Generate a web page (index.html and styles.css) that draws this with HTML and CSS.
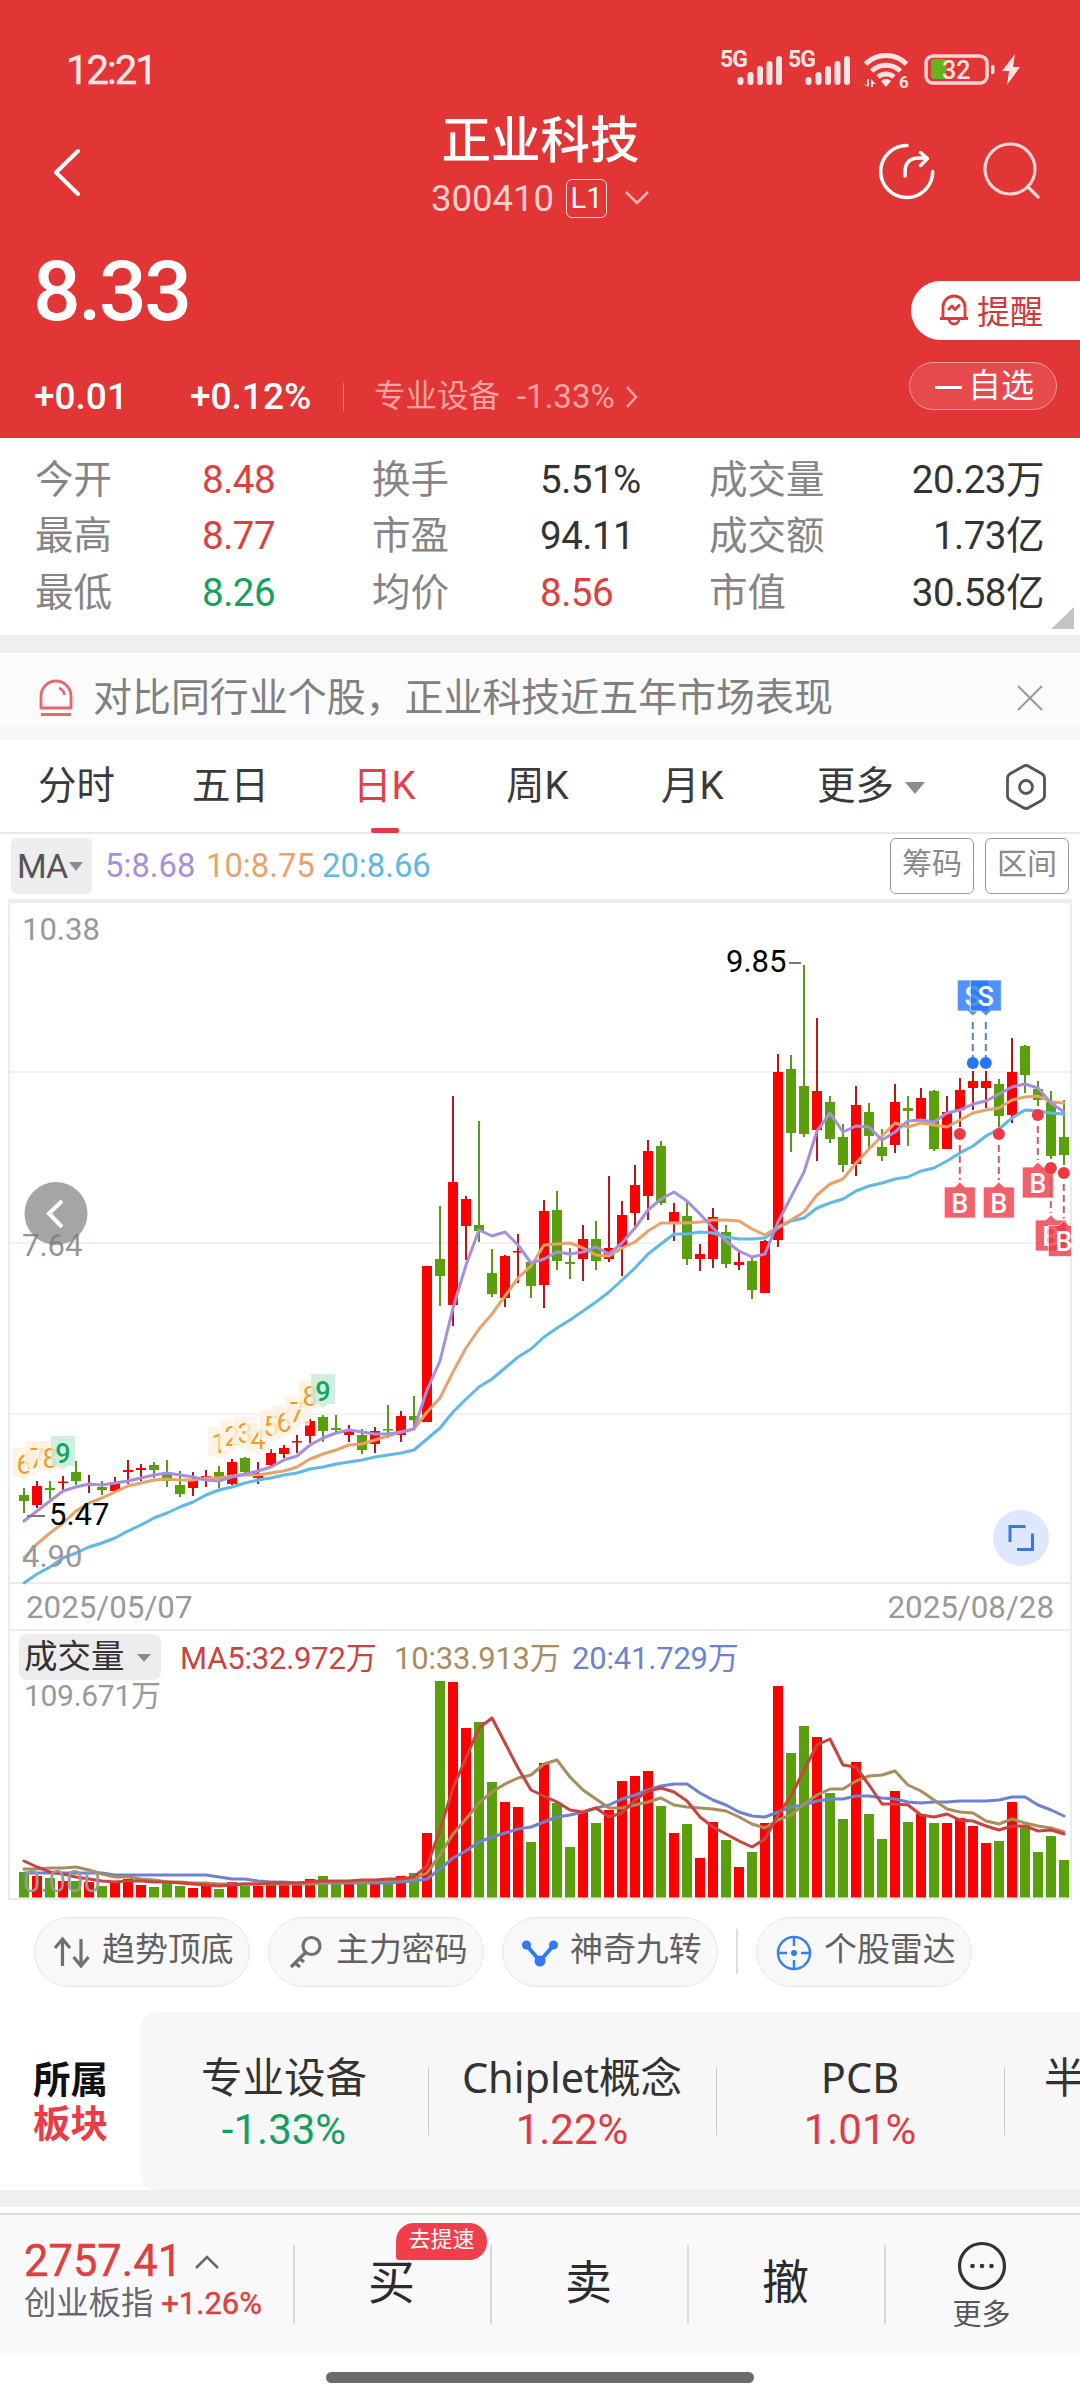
FILE: index.html
```html
<!DOCTYPE html>
<html lang="zh-CN">
<head>
<meta charset="utf-8">
<title>正业科技 300410</title>
<link rel="stylesheet" href="styles.css">
</head>
<body>
<div class="app">
  <header class="hero">
    <div class="status">
      <span class="clock">12:21</span>
      <svg class="status-icons" width="310" height="52" viewBox="716 40 310 52">
        <g class="net"><text x="720" y="67">5G</text><text x="788" y="67">5G</text></g>
        <g class="bars">
          <path d="M740.5 82v-2M750.500 82v-7M760 82v-13M769.500 82v-18M779 82v-23"/>
          <path d="M808.500 82v-2M818.500 82v-7M828 82v-13M837.500 82v-18M847 82v-23"/>
        </g>
        <g class="wifi"><path d="M865.500 64a29 29 0 0 1 41 0M871.500 71a21 21 0 0 1 29 0M878 77a12 12 0 0 1 16 0"/></g>
        <path class="solid" d="M881 81a7 7 0 0 1 10 0l-5 6zM863 83l4 4v-8h2v8zM871 87v-8l5 5h-3v3z"/>
        <text class="tiny" x="899" y="88">6</text>
        <rect x="926" y="56" width="61" height="27" rx="7" class="cell"/>
        <path class="charge" d="M934 59h12v20h-12q-3 0-3-3v-14q0-3 3-3z"/>
        <text class="level" x="942" y="79">32</text>
        <rect x="991" y="65" width="3.500" height="9" rx="1.500" class="solid"/>
        <path class="solid" d="M1015 54l-13 17h7l-2 14 13-18h-7z"/>
      </svg>
    </div>
    <div class="nav">
      <svg class="back" width="30" height="50" viewBox="0 0 30 50"><path d="M26 4L4 25.500 26 47"/></svg>
      <div class="title">
        <h1>正业科技</h1>
        <div class="code"><span>300410</span><b>L1</b><svg width="26" height="16" viewBox="0 0 26 16"><path d="M2 2l11 11L24 2"/></svg></div>
      </div>
      <svg class="nav-icons" width="164" height="60" viewBox="878 142 164 60">
        <path class="share" d="M907 145.500a26 26 0 1 0 25.700 26M905 176v-4q0-14 14-14h8M920.500 152.500l7 6-7 7"/>
        <path class="search" d="M1035 169a25 25 0 1 0-50 0a25 25 0 0 0 50 0M1029 188l9 9"/>
      </svg>
    </div>
    <div class="quote">
      <div class="price">8.33</div>
      <div class="alert">
        <svg width="32" height="34" viewBox="0 0 32 34"><path d="M2 25.500h28M5 25V14a11 11 0 0 1 22 0v11M11 26a5 5 0 0 0 10 0M10 17l4-4 3 3.500 5-5"/></svg>
        提醒
      </div>
    </div>
    <div class="change">
      <span class="diff">+0.01</span><span class="pct">+0.12%</span><i></i>
      <span class="industry">专业设备</span><span class="industry-pct">-1.33%</span>
      <svg width="14" height="24" viewBox="0 0 14 24"><path d="M2 2l9 10-9 10"/></svg>
      <div class="watch"><em></em>自选</div>
    </div>
  </header>

  <section class="stats">
    <span>今开</span><b class="up">8.48</b><span>换手</span><b>5.51%</b><span>成交量</span><b class="end">20.23万</b>
    <span>最高</span><b class="up">8.77</b><span>市盈</span><b>94.11</b><span>成交额</span><b class="end">1.73亿</b>
    <span>最低</span><b class="down">8.26</b><span>均价</span><b class="up">8.56</b><span>市值</span><b class="end">30.58亿</b>
    <i class="corner"></i>
  </section>

  <section class="notice">
    <svg width="36" height="38" viewBox="0 0 36 38"><path d="M3 29V17a15 15 0 0 1 30 0v12zM3 35.500h30M21 9q5 2 5.500 7"/></svg>
    <p>对比同行业个股，正业科技近五年市场表现</p>
    <svg class="close" width="26" height="26" viewBox="0 0 26 26"><path d="M1 1l24 24M25 1L1 25"/></svg>
  </section>

  <nav class="tabs">
    <span>分时</span><span>五日</span><span class="active">日K</span><span>周K</span><span>月K</span><span class="more">更多<i class="tri"></i></span>
    <svg width="42" height="48" viewBox="0 0 42 48"><path d="M18 3.500q3-2 6 0l12.500 7q3 1.700 3 5v17q0 3.300-3 5l-12.500 7q-3 2-6 0l-12.500-7q-3-1.700-3-5v-17q0-3.300 3-5z"/><circle cx="21" cy="24" r="6.500"/></svg>
  </nav>

  <div class="ma">
    <div class="ma-pick">MA<i class="tri"></i></div>
    <span class="c5">5:8.68</span><span class="c10">10:8.75</span><span class="c20">20:8.66</span>
    <div class="box-btn">筹码</div><div class="box-btn">区间</div>
  </div>

  <svg class="chart" id="price" width="1080" height="684" viewBox="0 900 1080 684"></svg>
  <div class="dates"><span>2025/05/07</span><span>2025/08/28</span></div>
  <div class="vol-head">
    <div class="vol-pick">成交量<i class="tri"></i></div>
    <span class="v5">MA5:32.972万</span><span class="v10">10:33.913万</span><span class="v20">20:41.729万</span>
  </div>
  <svg class="chart" id="volume" width="1080" height="220" viewBox="0 1680 1080 220"></svg>

  <div class="chips">
    <div class="chip"><svg width="38" height="36" viewBox="0 0 38 36"><path class="gray" d="M9.500 31V5M2 13l7.500-9 7.500 9M28 4v27M20.500 22l7.500 9 7.500-9"/></svg>趋势顶底</div>
    <div class="chip"><svg width="38" height="36" viewBox="0 0 38 36"><path class="gray" d="M33 11a8.500 8.500 0 1 0-17 0a8.500 8.500 0 0 0 17 0M18.500 17.500L4 32M8 28l5 4M12 23l5 4"/></svg>主力密码</div>
    <div class="chip"><svg width="38" height="36" viewBox="0 0 38 36"><path class="blue thick" d="M6 11l13 15L32 11"/><g class="bluefill"><circle cx="5.500" cy="10" r="4.500"/><circle cx="32.500" cy="10" r="4.500"/><circle cx="19" cy="26" r="5.500"/></g></svg>神奇九转</div>
    <i class="sep"></i>
    <div class="chip"><svg width="38" height="36" viewBox="0 0 38 36"><circle class="blue" cx="19" cy="18" r="16"/><path class="blue" d="M19 2v9M19 25v9M3 18h9M26 18h9"/><circle class="bluefill" cx="19" cy="18" r="3"/></svg>个股雷达</div>
  </div>

  <section class="sector">
    <div class="sector-title">所属<b>板块</b></div>
    <div class="sector-list">
      <div class="item"><span>专业设备</span><b class="down">-1.33%</b></div>
      <div class="item"><span>Chiplet概念</span><b class="rise">1.22%</b></div>
      <div class="item"><span>PCB</span><b class="rise">1.01%</b></div>
      <div class="item cut"><span>半</span></div>
    </div>
  </section>

  <footer class="trade">
    <div class="index">
      <div class="index-val">2757.41<svg width="26" height="16" viewBox="0 0 26 16"><path d="M2 14L13 3l11 11"/></svg></div>
      <div class="index-name">创业板指 <b>+1.26%</b></div>
    </div>
    <div class="act">买<span class="badge">去提速</span></div>
    <div class="act">卖</div>
    <div class="act">撤</div>
    <div class="act last"><svg width="50" height="50" viewBox="0 0 50 50"><circle cx="25" cy="25" r="22.500"/><g><circle cx="15.500" cy="25" r="2.300"/><circle cx="25" cy="25" r="2.300"/><circle cx="34.500" cy="25" r="2.300"/></g></svg><span>更多</span></div>
  </footer>
  <div class="home"><i></i></div>
</div>
<script src="chart.js"></script>
</body>
</html>
```
FILE: styles.css
```css
* { box-sizing: border-box; margin: 0; padding: 0; }
body { width: 1080px; height: 2400px; overflow: hidden; background: #fff; font-family: Roboto, "Noto Sans CJK SC", sans-serif; color: #333; }
.app { width: 1080px; height: 2400px; display: flex; flex-direction: column; }
.app > * { flex: none; }
svg { display: block; fill: none; flex: none; overflow: visible; }
i, em { display: block; font-style: normal; }
b { font-weight: 400; }
.up { color: #dd403d; }
.down { color: #14a15d; }
.rise { color: #e03c46; }
.tri { border: solid transparent; border-top-color: #8c8c8c; border-bottom: 0; }

.hero { height: 438px; background: #e23536; color: #fff; }
.status { height: 110px; padding: 40px 54px 0 66px; display: flex; justify-content: space-between; }
.clock { font-size: 40px; line-height: 44px; margin-top: 9px; letter-spacing: -2px; color: #ffe6e6; -webkit-text-stroke: .4px #ffe6e6; }
.status-icons { font-weight: 500; }
.net text { font-size: 23px; fill: #ffe3e3; letter-spacing: -1px; font-weight: 700; }
.bars path { stroke: #ffe3e3; stroke-width: 6; stroke-linecap: round; }
.wifi path { stroke: #ffe3e3; stroke-width: 5; }
.solid { fill: #ffe3e3; }
.tiny { font-size: 17px; fill: #ffe3e3; font-weight: 700; }
.cell { stroke: #ffd3d3; stroke-width: 3.500px; }
.charge { fill: #62b51a; }
.level { font-size: 25px; fill: #ffe3e3; }
.nav { height: 120px; display: flex; position: relative; justify-content: space-between; padding: 0 38px 0 52px; }
.back { margin-top: 37px; }
.back path { stroke: #fff; stroke-width: 4; stroke-linecap: round; stroke-linejoin: round; }
.title { margin-left: 121px; text-align: center; width: 420px; }
.title h1 { font-size: 49.500px; line-height: 60px; font-weight: 500; margin-top: 1px; }
.code { display: flex; justify-content: center; align-items: center; height: 40px; margin-top: 7px; font-size: 36.500px; color: #ffd0d0; }
.code b { width: 41px; height: 39px; margin: 0 17px 0 12px; border: 1.500px solid #ffd9d9; border-radius: 6px; font-size: 29px; line-height: 36px; color: #fff; }
.code path { stroke: #ffb4b4; stroke-width: 2.500px; }
.nav-icons { margin-top: 32px; }
.nav-icons path { stroke-linecap: round; stroke-linejoin: round; }
.share { stroke: #fff; stroke-width: 3.500px; }
.search { stroke: #ffd5d5; stroke-width: 3.200px; }
.quote { height: 130px; display: flex; justify-content: space-between; padding-left: 33px; }
.price { font-size: 84px; line-height: 98px; font-weight: 500; margin-top: 13px; letter-spacing: -2.500px; }
.alert { width: 169px; height: 59px; margin-top: 51px; background: #fff; border-radius: 30px 0 0 30px; display: flex; align-items: center; padding-left: 27px; gap: 7px; font-size: 33px; color: #ce3a3a; padding-bottom: 2px; }
.alert path { stroke: #d83c3c; stroke-width: 2.800px; stroke-linejoin: round; }
.change { height: 78px; display: flex; align-items: flex-start; padding: 3px 23px 0 34px; font-size: 37px; line-height: 67px; }
.change > span { white-space: nowrap; }
.diff { width: 156px; font-weight: 500; }
.pct { width: 153px; font-weight: 500; }
.change > i { width: 1px; height: 28px; background: #f08a8a; margin: 20px 30px 0 0; }
.industry { font-size: 31.500px; color: #f6a3a3; width: 143px; }
.industry-pct { font-size: 33px; color: #f6a3a3; width: 108px; }
.change > svg { margin-top: 22px; }
.change > svg path { stroke: #f6a3a3; stroke-width: 2.500px; }
.watch { margin-left: auto; width: 148px; height: 48px; margin-top: -1px; border: 1.500px solid #f29a9a; border-radius: 24px; background: rgba(255,255,255,.11); display: flex; align-items: center; padding-left: 25px; gap: 6px; font-size: 33px; line-height: 42px; }
.watch em { width: 27px; height: 3px; background: #fff; margin-top: 2px; }

.stats { height: 197px; position: relative; display: grid; grid-template-columns: 167px 170px 168px 169px 169px 166px; grid-auto-rows: 56.500px; padding: 13.500px 0 0 35px; font-size: 38.500px; line-height: 56px; color: #858585; background: #fff; }
.stats b { color: #333; letter-spacing: -.5px; }
.stats span { white-space: nowrap; }
.stats b.up { color: #dd403d; }
.stats b.down { color: #14a15d; }
.stats .end { text-align: right; }
.corner { position: absolute; right: 6px; bottom: 6px; border: solid transparent; border-width: 22px 0 0 23px; border-left: 23px solid transparent; border-bottom: 22px solid #c4c4c4; border-top: 0; }

.notice { height: 105px; border-top: 18px solid #efefef; border-bottom: 14px solid #f7f7f7; background: #fbfbfb; display: flex; align-items: center; padding: 16px 37px 0 38px; }
.notice svg path { stroke: #e26a6f; stroke-width: 2.800px; stroke-linejoin: round; }
.notice p { flex: 1; margin-left: 19px; font-size: 38.950px; line-height: 56px; color: #808080; }
.notice .close path { stroke: #999; stroke-width: 2px; }

.tabs { height: 94px; border-bottom: 2px solid #e8e8e8; display: grid; grid-template-columns: 154px 161px 153px 155px 156px 188px 42px; padding-left: 38px; font-size: 38.500px; line-height: 88px; padding-top: 2px; color: #3a3a3a; align-items: start; }
.tabs .active { color: #e0404a; position: relative; }
.tabs .active::after { content: ""; position: absolute; left: 18px; top: 86px; width: 28px; height: 5px; border-radius: 2px; background: #e23c46; }
.tabs svg { margin-top: 21px; }
.tabs svg * { stroke: #555; stroke-width: 2.800px; }
.more { display: flex; align-items: center; gap: 11px; }
.more .tri { border-width: 12px 10.500px 0; margin-top: 4px; }

.ma { height: 66px; display: flex; align-items: flex-start; padding: 4px 11px 0; font-size: 32.800px; line-height: 56px; }
.ma-pick { width: 81px; height: 56px; background: #ededed; border-radius: 6px; display: flex; align-items: center; padding-left: 6px; gap: 2px; margin-right: 13px; color: #555; font-size: 34px; letter-spacing: -1px; }
.ma-pick .tri { border-width: 9px 7px 0; }
.c5 { color: #a68fdd; width: 101px; }
.c10 { color: #e8a36c; width: 116px; }
.c20 { color: #5fb8e6; flex: 1; }
.box-btn { width: 84px; height: 56px; border: 1.500px solid #999; border-radius: 6px; text-align: center; font-size: 30px; line-height: 50px; color: #8a8a8a; margin-left: 11px; }

.chart text { font-size: 31px; }
.frame { stroke: #ebebeb; stroke-width: 2; }
.top { stroke: #ededed; stroke-width: 4; }
.grid { stroke: #f1f1f1; stroke-width: 2; }
.r { fill: #f00; }
.g { fill: #5aa00c; }
.rw { stroke: #b81618; stroke-width: 2; }
.gw { stroke: #5a9a18; stroke-width: 2; }
.line { stroke-width: 3px; stroke-linejoin: round; stroke-linecap: round; }
.axis { fill: #999; }
.mark { fill: #000; }
.tag { fill: #e6a030; text-anchor: middle; }
.chart text.tag { font-size: 27px; }
.chart text.nine { fill: #14a55f; font-weight: 500; }
.tag-bg { fill: #fff0df; fill-opacity: .8; stroke: #fff; stroke-width: 1; }
.nine-bg { fill: #c8ecda; fill-opacity: .85; }
.chart text.trade-text { fill: #fff; font-size: 27px; font-weight: 500; text-anchor: middle; }
.chart text.max { font-size: 30px; letter-spacing: -.3px; }
.dates { height: 45px; display: flex; justify-content: space-between; margin: 0 8px; padding: 0 16px; border: solid #ebebeb; border-width: 0 2px; font-size: 31.300px; line-height: 47px; color: #999; }
.vol-head { height: 51px; margin: 0 8px; border: solid #ebebeb; border-width: 2px 2px 0; display: flex; padding: 3px 0 0 9px; font-size: 31px; line-height: 50px; white-space: nowrap; letter-spacing: -.2px; }
.vol-pick { width: 142px; height: 46px; border-radius: 8px; background: #ededed; display: flex; align-items: center; gap: 12px; padding-left: 5px; margin-right: 19px; font-size: 33.500px; letter-spacing: 0; color: #333; }
.vol-pick .tri { border-width: 8px 7px 0; margin-top: 2px; }
.v5 { color: #c9433f; width: 214px; }
.v10 { color: #a88d5d; width: 178px; }
.v20 { color: #6d83cf; }

.chips { height: 112px; display: flex; padding: 17px 0 0 34px; }
.chip { width: 216px; height: 70px; border: 1.500px solid #e6e6e6; border-radius: 35px; background: #f8f8f8; display: flex; align-items: center; margin-right: 18px; padding: 0 0 11px 18px; gap: 11px; font-size: 32.900px; color: #606060; white-space: nowrap; }
.chip svg { margin-top: 12px; }
.sep { width: 2px; height: 45px; background: #ddd; margin: 12px 18px 0 0; }
.gray { stroke: #707070; stroke-width: 3.200; }
.blue { stroke: #3c80f0; stroke-width: 2.500px; }
.thick { stroke-width: 4; stroke: #2f7af5; }
.bluefill { fill: #2f7af5; }

.sector { height: 195px; border-bottom: 17px solid #efefef; display: flex; }
.sector-title { width: 141px; padding: 46px 0 0 33px; font-size: 37.500px; line-height: 44px; font-weight: 700; color: #111; }
.sector-title b { display: block; font-weight: 700; color: #ea3b48; }
.sector-list { flex: 1; background: #f7f7f7; border-radius: 14px 0 0 14px; display: flex; overflow: hidden; height: 178px; }
.item { flex: none; width: 288px; position: relative; text-align: center; padding-top: 35px; white-space: nowrap; font-size: 41.500px; font-family: "Noto Sans", "Noto Sans CJK SC", sans-serif; }
.item::after { content: ""; position: absolute; right: 0; top: 55px; height: 68px; width: 1px; background: #ccc; }
.item span, .item b { display: block; line-height: 60px; margin-left: -2px; }
.item b { font-family: Roboto, sans-serif; font-size: 42px; line-height: 46px; }
.cut { text-align: left; padding-left: 41px; }

.trade { height: 148px; border-top: 6px solid #fff; background: #f9f9fb; box-shadow: inset 0 2px #dadada; display: flex; }
.index { width: 293px; padding: 24px 0 0 24px; }
.index-val { display: flex; align-items: center; gap: 12px; font-size: 43.500px; line-height: 50px; color: #dd403d; -webkit-text-stroke: .4px #dd403d; }
.index-val path { stroke: #666; stroke-width: 2.500px; }
.index-name { font-size: 32.300px; line-height: 38px; margin-top: -3px; color: #666a70; white-space: nowrap; }
.index-name b { font-size: 31px; color: #dd403d; -webkit-text-stroke: .4px #dd403d; }
.act { width: 197px; position: relative; text-align: center; font-size: 47px; line-height: 139px; color: #2c2c2c; }
.act::before { content: ""; position: absolute; left: 0; top: 32px; width: 2px; height: 79px; background: #d9d9dc; }
.badge { position: absolute; left: 103px; top: 10px; width: 91px; height: 37px; border-radius: 18px 18px 18px 3px; background: #f03e4b; color: #fff; font-size: 22px; line-height: 34px; }
.last { width: 195px; display: flex; flex-direction: column; align-items: center; padding-top: 28px; line-height: 48px; font-size: 29px; color: #555; }
.last > svg > circle { stroke: #333; stroke-width: 3.200px; }
.last g { fill: #333; }
.home { height: 45px; display: flex; justify-content: center; padding-top: 17px; }
.home i { width: 428px; height: 11px; border-radius: 6px; background: #6b6b6b; }
```
FILE: chart.js
```js
const x = i => 24 + i * 13;

// trend, high, body top, body bottom, low
const candles = `g 1488 1495 1501 1513|r 1481 1486 1505 1508|g 1481 1488 1490 1499|r 1476 1481.5 1483 1492|g 1461 1472 1481 1485|r 1475 1484 1485.5 1493|g 1481 1487 1490 1495|r 1477 1482 1491 1492|r 1460 1470 1472 1484|r 1464 1468 1470 1481
g 1462 1465 1470 1478|g 1460 1473 1481 1487|g 1471 1485 1494 1497|r 1472 1480 1488 1496|r 1470 1476 1477.5 1487|g 1466 1472 1477 1488|r 1459 1462 1484 1485|g 1457 1458 1472 1476|r 1462 1473 1478 1484|r 1449 1453 1465 1467
r 1445 1448 1454 1458|r 1435 1441 1442.5 1453|r 1419 1421 1436 1443|g 1415 1417 1431 1442|g 1415 1428 1430 1432|r 1425 1431 1435 1442|g 1429 1435 1450 1454|r 1427 1431 1444 1453|g 1405 1429 1430.5 1438|r 1411 1416 1435 1442
g 1396 1416 1420 1427|r 1266 1266 1422 1422|g 1206 1259 1276 1306|r 1096 1182 1305 1326|r 1196 1199 1226 1260|g 1121 1225 1231 1242|g 1249 1273 1294 1297|r 1255 1256 1298 1307|r 1234 1251 1252.5 1283|g 1261 1262 1286 1298
r 1200 1211 1285 1308|g 1191 1210 1261 1270|g 1248 1262 1264 1279|r 1225 1239 1259 1281|g 1221 1239 1261 1270|r 1176 1248 1259 1262|r 1201 1215 1247 1276|r 1165 1185 1213 1227|r 1140 1151 1196 1220|g 1141 1146 1203 1205
r 1203 1212 1222 1241|g 1202 1216 1259 1265|r 1244 1254 1259 1271|r 1208 1217 1259 1268|g 1225 1232 1264 1268|r 1252 1262 1265 1270|g 1258 1261 1290 1299|r 1240 1241 1293 1293|r 1054 1072 1240 1247|g 1055 1069 1133 1152
g 965 1086 1134 1137|r 1018 1091 1130 1161|g 1096 1102 1139 1143|g 1124 1137 1165 1172|r 1086 1105 1164 1176|g 1103 1112 1136 1148|g 1129 1147 1156 1161|r 1084 1102 1145 1153|g 1096 1108 1111 1146|r 1088 1098 1119 1120
g 1090 1091 1149 1151|r 1096 1112 1149 1149|r 1078 1090 1110 1127|r 1071 1081 1088 1110|r 1071 1081 1088 1108|g 1079 1084 1116 1130|r 1038 1072 1115 1123|g 1045 1046 1075 1093|g 1081 1089 1100 1106|g 1091 1102 1156 1159
g 1100 1137 1155 1165`.split(/[|\n]/).map(s => s.split(' '));

const priceMA = {
  '#5fb8e6': [1583,1574,1567,1558,1553,1547,1543,1538,1531,1525,1518,1513,1507,1502,1495,1490,1487,1483,1480,1478,1475,1473,1469,1467,1464,1462,1460,1457,1455,1453,1450,1439,1428,1412,1399,1387,1379,1368,1357,1349,1337,1328,1320,1311,1302,1292,1280,1268,1254,1244,1234,1234,1232,1233,1237,1239,1239,1238,1228,1221,1218,1208,1203,1199,1191,1186,1183,1179,1177,1171,1168,1161,1153,1146,1136,1129,1118,1110,1111,1113,1114],
  '#e8a36c': [1558,1544,1533,1523,1511,1503,1498,1492,1486,1483,1480,1479,1480,1480,1478,1478,1476,1475,1475,1473,1471,1467,1459,1454,1450,1445,1444,1440,1436,1432,1429,1412,1398,1372,1348,1329,1314,1296,1278,1266,1245,1244,1243,1248,1255,1256,1248,1242,1231,1223,1223,1223,1222,1220,1220,1221,1229,1235,1227,1220,1212,1195,1184,1179,1163,1149,1136,1123,1127,1123,1125,1127,1120,1113,1110,1108,1100,1097,1096,1102,1103],
  '#a68fdd': [1521,1511,1501,1491,1487,1484,1485,1483,1481,1478,1475,1473,1475,1477,1480,1481,1477,1474,1471,1467,1460,1456,1445,1438,1433,1430,1432,1434,1434,1432,1429,1390,1361,1308,1265,1230,1236,1232,1245,1263,1259,1252,1254,1252,1247,1254,1243,1228,1210,1199,1192,1201,1214,1228,1241,1251,1257,1254,1222,1197,1172,1131,1113,1132,1126,1127,1140,1132,1121,1120,1122,1113,1110,1104,1101,1094,1087,1084,1088,1103,1112]
};

const volumes = [1872,1876,1878,1881,1881,1882,1886,1883,1879,1885,1887,1883,1886,1888,1886,1889,1882,1886,1886,1884,1883,1883,1879,1876,1883,1883,1880,1879,1878,1876,1873,1833,1681,1682,1728,1722,1782,1802,1807,1842,1763,1803,1847,1812,1823,1810,1781,1776,1771,1806,1833,1824,1858,1822,1840,1867,1852,1823,1686,1753,1726,1737,1793,1819,1762,1814,1839,1791,1822,1814,1823,1823,1818,1826,1843,1841,1802,1825,1852,1836,1860];

const volumeMA = {
  '#6d83cf': [1873,1873,1873,1873,1873,1873,1873,1875,1875,1875,1875,1875,1875,1875,1875,1877,1879,1879,1881,1882,1882,1883,1883,1883,1883,1883,1883,1883,1883,1882,1881,1879,1869,1858,1851,1842,1837,1833,1829,1827,1822,1817,1815,1812,1808,1805,1799,1795,1790,1786,1784,1784,1793,1800,1805,1812,1816,1817,1812,1807,1805,1801,1799,1799,1796,1796,1798,1799,1802,1803,1802,1802,1801,1801,1801,1800,1797,1797,1805,1810,1816],
  '#a88d5d': [1869,1869,1868,1868,1867,1870,1874,1877,1877,1879,1880,1882,1882,1883,1883,1884,1884,1884,1884,1884,1884,1884,1884,1883,1882,1882,1882,1881,1881,1880,1879,1873,1855,1834,1819,1803,1792,1784,1778,1775,1764,1760,1777,1790,1799,1808,1808,1805,1802,1798,1805,1807,1808,1809,1811,1817,1824,1828,1820,1815,1804,1795,1789,1789,1781,1776,1775,1771,1785,1791,1800,1809,1812,1813,1821,1824,1819,1823,1826,1828,1832],
  '#c9433f': [1861,1867,1872,1874,1877,1879,1881,1882,1881,1881,1882,1882,1883,1884,1885,1886,1885,1884,1884,1883,1883,1883,1882,1881,1881,1881,1880,1880,1879,1879,1877,1866,1830,1788,1758,1728,1718,1743,1768,1790,1796,1802,1810,1812,1808,1817,1813,1800,1791,1788,1792,1801,1817,1827,1834,1841,1847,1839,1815,1796,1770,1745,1739,1765,1767,1785,1804,1804,1805,1815,1817,1814,1820,1821,1826,1830,1826,1826,1831,1830,1834]
};

const lines = set => Object.entries(set).map(([color, ys]) =>
  `<polyline class="line" stroke="${color}" points="${ys.map((y, i) => x(i) + ',' + y).join(' ')}"/>`).join('');
const text = (cls, tx, ty, s) => `<text class="${cls}" x="${tx}" y="${ty}">${s}</text>`;

let out = '<path class="grid" d="M9 1072H1071M9 1243H1071M9 1414H1071"/>';
out += '<path class="frame" d="M9 1584V900M1071 900V1584M9 1583H1071"/><path class="top" d="M8 901H1072"/>';
candles.forEach(([c, h, t, b, l], i) => {
  out += `<path class="${c}w" d="M${x(i)} ${h}V${l}"/><rect class="${c}" x="${x(i) - 5}" y="${t}" width="10" height="${b - t}"/>`;
});
out += lines(priceMA);

// nine-turn counters: candle index, text baseline, digit
[[0,1474,6],[1,1467.500,7],[2,1467.500,8],[3,1463,9],[15,1453,1],[16,1446,2],[17,1443,3],[18,1449,4],[19,1436,5],[20,1432,6],[21,1422,7],[22,1406,8],[23,1401,9]].forEach(([i, y, n]) => {
  const nine = n === 9, cx = x(i);
  out += `<path class="${nine ? 'nine-bg' : 'tag-bg'}" d="M${cx - 12} ${y - 27}h24v30h-8l-4 4-4-4h-8z"/>`;
  out += text(nine ? 'tag nine' : 'tag', cx, y, n);
});

out += text('axis', 22, 940, '10.38') + text('axis', 22, 1567, '4.90');
out += '<circle cx="56" cy="1213.500" r="31.500" fill="#a5a5a5"/><path stroke="#fff" stroke-width="4" d="M62 1201L49 1213.500 62 1227"/>';
out += '<g opacity=".8">' + text('axis', 22, 1256, '7.64').replace('class="axis"', 'fill="#7c7c7c"') + '</g>';
out += '<path stroke="#777" stroke-width="2" d="M27 1516H45M789 963H801"/>';
out += text('mark', 49, 1525, '5.47') + text('mark', 726, 972, '9.85');

// trades: candle index, dot y, box top, side
[[73,1063,980,'S'],[74,1063,980,'S'],[72,1134,1187,'B'],[75,1134,1187,'B'],[78,1115,1167,'B'],[79,1168,1220,'B'],[80,1173,1225.500,'B']].forEach(([i, dot, top, side]) => {
  const cx = x(i) - .2, sell = side === 'S', left = cx - 15.500, right = Math.min(cx + 15.500, 1071.500);
  const color = sell ? '#2677f6' : '#ef3846';
  const box = sell ? `M${left} ${top}H${right}v31H${cx + 5}l-5 5-5-5H${left}z`
                   : `M${left} ${top}H${cx - 5}l5-5 5 5H${right}v31H${left}z`;
  out += `<path stroke="${sell ? '#4d86d6' : '#d0586a'}" stroke-width="2" stroke-dasharray="7 4" d="M${cx} ${sell ? 1022 : dot + 11}V${sell ? dot - 3 : top - 7}"/>`;
  out += `<circle cx="${cx}" cy="${dot}" r="6" fill="${color}"/>`;
  out += `<path d="${box}" fill="${color}" fill-opacity=".8" stroke="#fff" stroke-opacity=".7" stroke-width="1"/>` + text('trade-text', cx, top + 25.500, side);
});
out += '<circle cx="1021" cy="1538" r="28" fill="#dee7fd"/><path stroke="#3a78e0" stroke-width="3" d="M1010 1542v-15.500h15.500M1017 1549.500h15.500v-16"/>';
document.getElementById('price').innerHTML = out;

let vol = '<path class="frame" d="M9 1680V1899H1071V1680"/>';
volumes.forEach((top, i) => {
  vol += `<rect class="${candles[i][0]}" x="${x(i) - 5}" y="${top}" width="10" height="${1897.500 - top}"/>`;
});
vol += lines(volumeMA) + text('axis max', 24, 1706, '109.671万') + text('axis', 23, 1892, '0.000');
document.getElementById('volume').innerHTML = vol;
```
